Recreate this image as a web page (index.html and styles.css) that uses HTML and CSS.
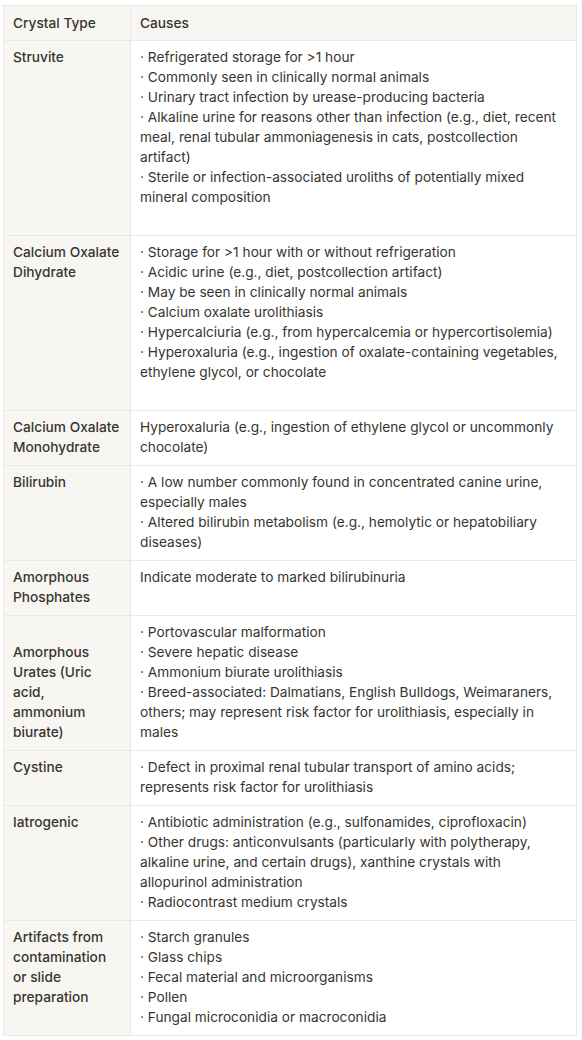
FILE: index.html
```html
<!DOCTYPE html>
<html>
<head>
<meta charset="utf-8">
<link rel="stylesheet" href="styles.css">
</head>
<body>
<table class="grid">
  <colgroup><col class="c1"><col class="c2"></colgroup>
  <thead>
    <tr><th>Crystal Type</th><th class="h2">Causes</th></tr>
  </thead>
  <tbody>
    <tr>
      <td class="name">Struvite</td>
      <td class="tall">· Refrigerated storage for &gt;1 hour<br>· Commonly seen in clinically normal animals<br>· Urinary tract infection by urease-producing bacteria<br>· Alkaline urine for reasons other than infection (e.g., diet, recent meal, renal tubular ammoniagenesis in cats, postcollection artifact)<br>· Sterile or infection-associated uroliths of potentially mixed mineral composition</td>
    </tr>
    <tr>
      <td class="name">Calcium Oxalate Dihydrate</td>
      <td class="tall">· Storage for &gt;1 hour with or without refrigeration<br>· Acidic urine (e.g., diet, postcollection artifact)<br>· May be seen in clinically normal animals<br>· Calcium oxalate urolithiasis<br>· Hypercalciuria (e.g., from hypercalcemia or hypercortisolemia)<br>· Hyperoxaluria (e.g., ingestion of oxalate-containing vegetables, ethylene glycol, or chocolate</td>
    </tr>
    <tr>
      <td class="name">Calcium Oxalate Monohydrate</td>
      <td>Hyperoxaluria (e.g., ingestion of ethylene glycol or uncommonly chocolate)</td>
    </tr>
    <tr>
      <td class="name">Bilirubin</td>
      <td>· A low number commonly found in concentrated canine urine, especially males<br>· Altered bilirubin metabolism (e.g., hemolytic or hepatobiliary diseases)</td>
    </tr>
    <tr>
      <td class="name">Amorphous Phosphates</td>
      <td>Indicate moderate to marked bilirubinuria</td>
    </tr>
    <tr>
      <td class="name low">Amorphous Urates (Uric acid, ammonium biurate)</td>
      <td>· Portovascular malformation<br>· Severe hepatic disease<br>· Ammonium biurate urolithiasis<br>· Breed-associated: Dalmatians, English Bulldogs, Weimaraners, others; may represent risk factor for urolithiasis, especially in males</td>
    </tr>
    <tr>
      <td class="name">Cystine</td>
      <td>· Defect in proximal renal tubular transport of amino acids; represents risk factor for urolithiasis</td>
    </tr>
    <tr>
      <td class="name">Iatrogenic</td>
      <td>· Antibiotic administration (e.g., sulfonamides, ciprofloxacin)<br>· Other drugs: anticonvulsants (particularly with polytherapy, alkaline urine, and certain drugs), xanthine crystals with allopurinol administration<br>· Radiocontrast medium crystals</td>
    </tr>
    <tr>
      <td class="name">Artifacts from contamination or slide preparation</td>
      <td>· Starch granules<br>· Glass chips<br>· Fecal material and microorganisms<br>· Pollen<br>· Fungal microconidia or macroconidia</td>
    </tr>
  </tbody>
</table>
</body>
</html>
```

FILE: styles.css
```css
html, body {
  background: #ffffff;
}
body {
  margin: 0;
  padding: 5px 5px 0 3px;
  font-family: Inter, "Noto Sans", sans-serif;
  font-size: 13.7px;
  line-height: 20px;
  color: #37352f;
}
.grid {
  width: 574px;
  border-collapse: collapse;
  table-layout: fixed;
}
.c1 { width: 127px; }
.grid th,
.grid td {
  border: 1px solid #e9e9e7;
  padding: 6px 10px 8px 9px;
  text-align: left;
  vertical-align: top;
  font-weight: 400;
}
.grid th {
  background: #f7f6f3;
  font-weight: 500;
  padding-top: 7px;
  padding-bottom: 7px;
}
.grid td.name {
  background: #f7f6f3;
  font-weight: 500;
}
.grid td.tall {
  padding-bottom: 28px;
}
.grid td.low {
  vertical-align: bottom;
}
```
